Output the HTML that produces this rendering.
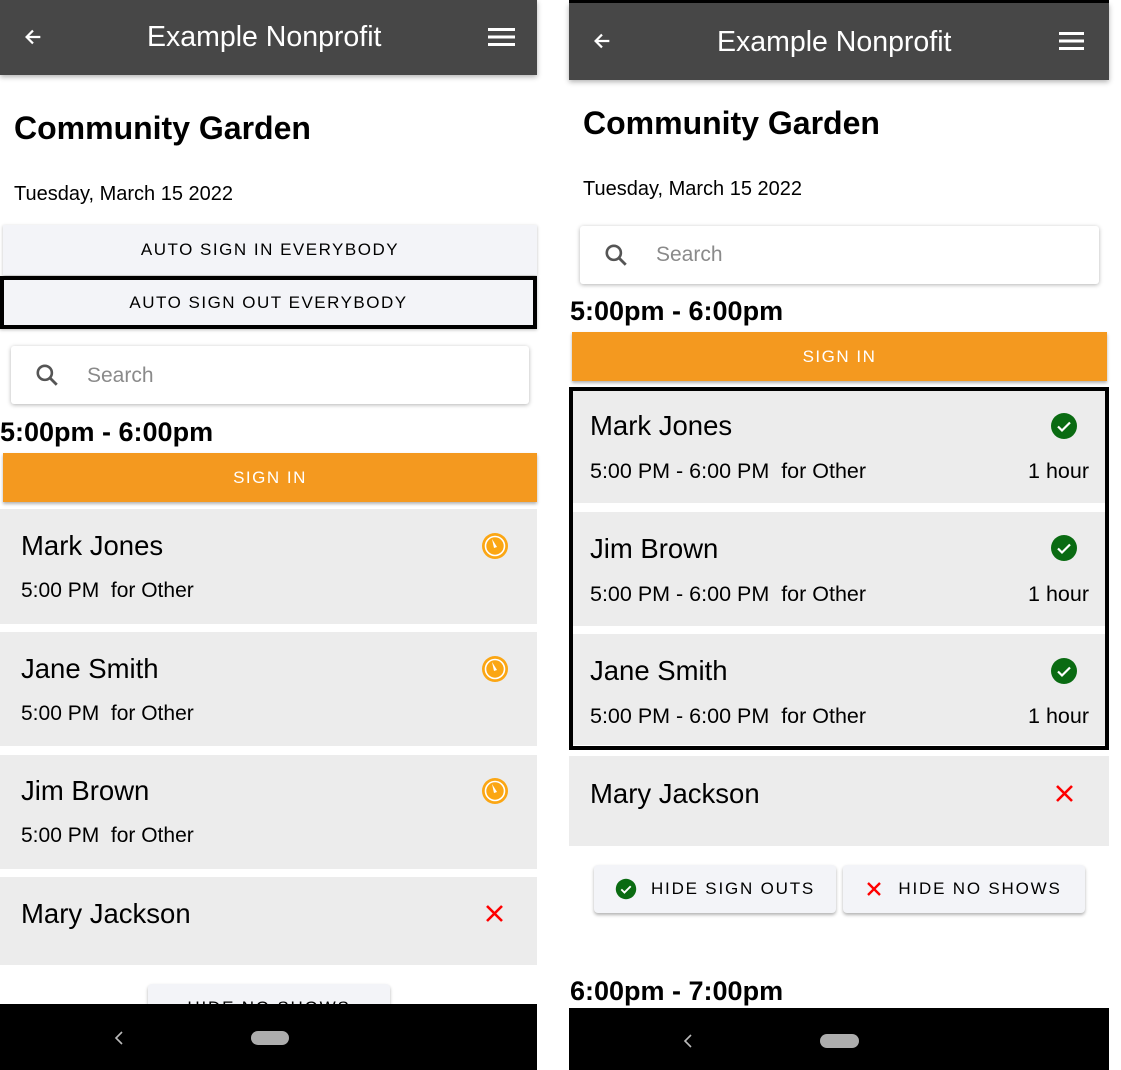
<!DOCTYPE html>
<html><head><meta charset="utf-8"><style>
*{margin:0;padding:0;box-sizing:border-box}
body{width:1121px;height:1070px;background:#fff;position:relative;overflow:hidden;font-family:"Liberation Sans",Arial,sans-serif;color:#000}
.a{position:absolute}
.t{position:absolute;white-space:nowrap}
.hdr{background:#474747;box-shadow:0 2px 5px rgba(0,0,0,.3)}
.ht{color:#fff;font-size:28.5px;line-height:30px}
.h1{font-size:32px;font-weight:bold;line-height:34px}
.dt{font-size:20px;line-height:22px}
.btn{background:#f3f4f8;display:flex;align-items:center;justify-content:center;font-size:17px;letter-spacing:1.5px;box-shadow:0 1px 3px rgba(0,0,0,.25)}
.srch{background:#fff;box-shadow:0 1px 4px rgba(0,0,0,.3);border-radius:3px}
.st{color:#8a8a8a;font-size:21px;line-height:22px}
.tm{font-size:27px;font-weight:bold;line-height:28px}
.or{background:#f4991f;color:#fff;display:flex;align-items:center;justify-content:center;font-size:17px;letter-spacing:1.5px;box-shadow:0 2px 3px rgba(0,0,0,.3)}
.card{background:#ececec}
.nm{font-size:27.5px;line-height:28px}
.sb{font-size:21px;line-height:22px}
.sb2{font-size:21.5px;line-height:22px}
.hr{font-size:21.5px;line-height:22px;right:32px;text-align:right}
.nav{background:#000}
.pill{background:#adadad;border-radius:8px}
.hb{background:#f3f4f8;border-radius:4px;box-shadow:0 2px 3px rgba(0,0,0,.3);display:flex;align-items:center;justify-content:center;font-size:17px;letter-spacing:1.8px}
</style></head><body>

<!-- LEFT PANEL -->
<div class="a hdr" style="left:0;top:0;width:537px;height:75px"></div>
<svg class="a" style="left:22px;top:26px" width="22" height="22" viewBox="0 0 24 24"><path d="M20 12H5M12 5l-7 7 7 7" stroke="#fff" stroke-width="2.4" fill="none"/></svg>
<div class="t ht" style="left:147px;top:22px">Example Nonprofit</div>
<svg class="a" style="left:488px;top:27px" width="27" height="20" viewBox="0 0 27 20"><rect y="1" width="27" height="3" fill="#fff"/><rect y="8.5" width="27" height="3" fill="#fff"/><rect y="16" width="27" height="3" fill="#fff"/></svg>
<div class="t h1" style="left:14px;top:111px">Community Garden</div>
<div class="t dt" style="left:14px;top:183px">Tuesday, March 15 2022</div>
<div class="a btn" style="left:3px;top:225px;width:534px;height:50px">AUTO SIGN IN EVERYBODY</div>
<div class="a btn" style="left:0;top:276px;width:537px;height:53px;border:4px solid #000">AUTO SIGN OUT EVERYBODY</div>
<div class="a srch" style="left:11px;top:346px;width:518px;height:58px"></div>
<svg class="a" style="left:34px;top:362px" width="26" height="26" viewBox="0 0 24 24"><circle cx="10" cy="10" r="6.5" stroke="#555" stroke-width="2.4" fill="none"/><path d="M15 15l6 6" stroke="#555" stroke-width="2.6"/></svg>
<div class="t st" style="left:87px;top:365px">Search</div>
<div class="t tm" style="left:0;top:418px">5:00pm - 6:00pm</div>
<div class="a or" style="left:3px;top:453px;width:534px;height:49px">SIGN IN</div>

<div class="a card" style="left:0;top:509px;width:537px;height:115px"></div>
<div class="t nm" style="left:21px;top:532px">Mark Jones</div>
<div class="t sb" style="left:21px;top:580px">5:00 PM&nbsp; for Other</div>
<div class="a card" style="left:0;top:632px;width:537px;height:114px"></div>
<div class="t nm" style="left:21px;top:655px">Jane Smith</div>
<div class="t sb" style="left:21px;top:703px">5:00 PM&nbsp; for Other</div>
<div class="a card" style="left:0;top:755px;width:537px;height:114px"></div>
<div class="t nm" style="left:21px;top:777px">Jim Brown</div>
<div class="t sb" style="left:21px;top:825px">5:00 PM&nbsp; for Other</div>
<div class="a card" style="left:0;top:877px;width:537px;height:88px"></div>
<div class="t nm" style="left:21px;top:900px">Mary Jackson</div>
<svg class="a" style="left:485px;top:904px" width="19" height="19" viewBox="0 0 19 19"><path d="M2 2L17 17M17 2L2 17" stroke="#f00" stroke-width="2.6"/></svg>

<svg class="a" style="left:481px;top:532px" width="28" height="28" viewBox="0 0 28 28"><circle cx="14" cy="14" r="13" fill="#fba613"/><circle cx="14" cy="14" r="9.5" fill="none" stroke="#fff" stroke-width="1.6"/><path d="M11 7l5 8-3 1z" fill="#fff"/></svg>
<svg class="a" style="left:481px;top:655px" width="28" height="28" viewBox="0 0 28 28"><circle cx="14" cy="14" r="13" fill="#fba613"/><circle cx="14" cy="14" r="9.5" fill="none" stroke="#fff" stroke-width="1.6"/><path d="M11 7l5 8-3 1z" fill="#fff"/></svg>
<svg class="a" style="left:481px;top:777px" width="28" height="28" viewBox="0 0 28 28"><circle cx="14" cy="14" r="13" fill="#fba613"/><circle cx="14" cy="14" r="9.5" fill="none" stroke="#fff" stroke-width="1.6"/><path d="M11 7l5 8-3 1z" fill="#fff"/></svg>

<div class="a hb" style="left:148px;top:984px;width:242px;height:48px;align-items:flex-start;padding-top:14px">HIDE NO SHOWS</div>
<div class="a nav" style="left:0;top:1004px;width:537px;height:66px"></div>
<svg class="a" style="left:113px;top:1030px" width="12" height="16" viewBox="0 0 12 16"><path d="M9 2L3 8l6 6" stroke="#bbb" stroke-width="1.6" fill="none"/></svg>
<div class="a pill" style="left:251px;top:1031px;width:38px;height:14px"></div>

<!-- RIGHT PANEL -->
<div class="a" style="left:569px;top:0;width:540px;height:3px;background:#000"></div>
<div class="a hdr" style="left:569px;top:3px;width:540px;height:77px"></div>
<svg class="a" style="left:591px;top:30px" width="22" height="22" viewBox="0 0 24 24"><path d="M20 12H5M12 5l-7 7 7 7" stroke="#fff" stroke-width="2.4" fill="none"/></svg>
<div class="t ht" style="left:717px;top:27px">Example Nonprofit</div>
<svg class="a" style="left:1059px;top:31px" width="25" height="20" viewBox="0 0 25 20"><rect y="1" width="25" height="3" fill="#fff"/><rect y="8.5" width="25" height="3" fill="#fff"/><rect y="16" width="25" height="3" fill="#fff"/></svg>
<div class="t h1" style="left:583px;top:106px">Community Garden</div>
<div class="t dt" style="left:583px;top:178px">Tuesday, March 15 2022</div>
<div class="a srch" style="left:580px;top:226px;width:519px;height:58px"></div>
<svg class="a" style="left:603px;top:242px" width="26" height="26" viewBox="0 0 24 24"><circle cx="10" cy="10" r="6.5" stroke="#555" stroke-width="2.4" fill="none"/><path d="M15 15l6 6" stroke="#555" stroke-width="2.6"/></svg>
<div class="t st" style="left:656px;top:244px">Search</div>
<div class="t tm" style="left:570px;top:297px">5:00pm - 6:00pm</div>
<div class="a or" style="left:572px;top:332px;width:535px;height:49px">SIGN IN</div>

<div class="a" style="left:569px;top:387px;width:540px;height:363px;background:#fff;border:4px solid #000"></div>
<div class="a card" style="left:573px;top:391px;width:532px;height:112px"></div>
<div class="a card" style="left:573px;top:512px;width:532px;height:114px"></div>
<div class="a card" style="left:573px;top:634px;width:532px;height:111px"></div>
<div class="t nm" style="left:590px;top:412px">Mark Jones</div>
<div class="t sb2" style="left:590px;top:460px">5:00 PM&nbsp;-&nbsp;6:00 PM&nbsp; for Other</div>
<div class="t hr" style="top:460px">1 hour</div>
<div class="t nm" style="left:590px;top:535px">Jim Brown</div>
<div class="t sb2" style="left:590px;top:583px">5:00 PM&nbsp;-&nbsp;6:00 PM&nbsp; for Other</div>
<div class="t hr" style="top:583px">1 hour</div>
<div class="t nm" style="left:590px;top:657px">Jane Smith</div>
<div class="t sb2" style="left:590px;top:705px">5:00 PM&nbsp;-&nbsp;6:00 PM&nbsp; for Other</div>
<div class="t hr" style="top:705px">1 hour</div>
<svg class="a" style="left:1050px;top:412px" width="28" height="28" viewBox="0 0 28 28"><circle cx="14" cy="14" r="13" fill="#0a6b12"/><path d="M8 14.5l4 4 8-8" stroke="#fff" stroke-width="2.2" fill="none"/></svg>
<svg class="a" style="left:1050px;top:534px" width="28" height="28" viewBox="0 0 28 28"><circle cx="14" cy="14" r="13" fill="#0a6b12"/><path d="M8 14.5l4 4 8-8" stroke="#fff" stroke-width="2.2" fill="none"/></svg>
<svg class="a" style="left:1050px;top:657px" width="28" height="28" viewBox="0 0 28 28"><circle cx="14" cy="14" r="13" fill="#0a6b12"/><path d="M8 14.5l4 4 8-8" stroke="#fff" stroke-width="2.2" fill="none"/></svg>

<div class="a card" style="left:569px;top:756px;width:540px;height:90px"></div>
<div class="t nm" style="left:590px;top:780px">Mary Jackson</div>
<svg class="a" style="left:1055px;top:784px" width="19" height="19" viewBox="0 0 19 19"><path d="M2 2L17 17M17 2L2 17" stroke="#f00" stroke-width="2.6"/></svg>

<div class="a hb" style="left:594px;top:865px;width:242px;height:48px"><svg width="22" height="22" viewBox="0 0 28 28" style="margin-right:14px"><circle cx="14" cy="14" r="13" fill="#0a6b12"/><path d="M8 14.5l4 4 8-8" stroke="#fff" stroke-width="2.4" fill="none"/></svg>HIDE SIGN OUTS</div>
<div class="a hb" style="left:843px;top:865px;width:242px;height:48px"><svg width="16" height="16" viewBox="0 0 16 16" style="margin-right:16px"><path d="M2 2L14 14M14 2L2 14" stroke="#f00" stroke-width="2.4"/></svg>HIDE NO SHOWS</div>

<div class="t tm" style="left:570px;top:977px">6:00pm - 7:00pm</div>
<div class="a nav" style="left:569px;top:1008px;width:540px;height:62px"></div>
<svg class="a" style="left:682px;top:1033px" width="12" height="16" viewBox="0 0 12 16"><path d="M9 2L3 8l6 6" stroke="#bbb" stroke-width="1.6" fill="none"/></svg>
<div class="a pill" style="left:820px;top:1034px;width:39px;height:14px"></div>
</body></html>
